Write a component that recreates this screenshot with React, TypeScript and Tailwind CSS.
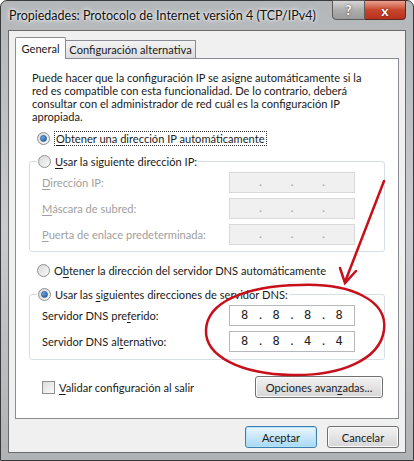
import React from 'react'

const FONT = "font-['Lato',sans-serif]"

// Win7 style radio button
function Radio({ checked }: { checked?: boolean }) {
  return (
    <span className="w-[13px] h-[13px] rounded-full border border-[#8e8f8f] bg-gradient-to-br from-[#d8d8d8] to-[#fafafa] flex items-center justify-center shrink-0">
      {checked && (
        <span className="w-[7px] h-[7px] rounded-full bg-gradient-to-br from-[#84b6e8] to-[#1c5aa6] border border-[#2a5f9b]" />
      )}
    </span>
  )
}

function U({ children }: { children: React.ReactNode }) {
  return <span className="underline underline-offset-2">{children}</span>
}

function IpField({ value, disabled }: { value?: string[]; disabled?: boolean }) {
  const parts = value ?? ['', '', '', '']
  return (
    <div
      className={`w-[126px] h-[21px] border flex items-center justify-around px-[6px] font-['DejaVu_Sans_Mono',monospace] text-[12px] ${
        disabled ? 'bg-[#f0f0f0] border-[#d9d9d9] text-[#a8a8a8]' : 'bg-white border-[#b5b8bd] text-[#222]'
      }`}
    >
      {parts.map((p, i) => (
        <React.Fragment key={i}>
          <span className="w-[10px] text-center">{p}</span>
          {i < 3 && <span className="text-[11px]">.</span>}
        </React.Fragment>
      ))}
    </div>
  )
}

function Row({ label, disabled, value }: { label: React.ReactNode; disabled?: boolean; value?: string[] }) {
  return (
    <div className="flex items-center justify-between h-[21px] pl-[12px] pr-[29px]">
      <span className={`whitespace-nowrap ${disabled ? 'text-[#a0a0a0]' : 'text-[#1a1a1a]'}`}>{label}</span>
      <IpField disabled={disabled} value={value} />
    </div>
  )
}

function Button({ children, focused, className = '' }: { children: React.ReactNode; focused?: boolean; className?: string }) {
  return (
    <button
      className={`h-[22px] rounded-[3px] border flex items-center justify-center text-[#1a1a1a] ${
        focused
          ? 'border-[#3c7fb1] bg-gradient-to-b from-[#eaf6fd] to-[#a7d9f5] shadow-[inset_0_0_0_1px_#b5e3fb]'
          : 'border-[#707070] bg-gradient-to-b from-[#f2f2f2] to-[#d6d6d6] shadow-[inset_0_0_0_1px_#fcfcfc]'
      } ${className}`}
    >
      {children}
    </button>
  )
}

export default function App() {
  return (
    <div className={`w-[414px] h-[461px] ${FONT} text-[11.1px] leading-[13px] relative overflow-hidden`}>
      {/* Window frame */}
      <div className="w-full h-full rounded-t-[7px] border border-[#3a3a3a] bg-gradient-to-b from-[#b4b7ba] via-[#c9cbce] to-[#b0b2b4] flex flex-col px-[7px] pb-[7px]">
        {/* Title bar */}
        <div className="h-[29px] flex items-start justify-between">
          <span className="mt-[7px] ml-[1px] text-[12.5px] leading-[16px] whitespace-nowrap text-[#111] [text-shadow:0_0_6px_#fff,0_0_3px_#fff]">
            Propiedades: Protocolo de Internet versión 4 (TCP/IPv4)
          </span>
          <div className="flex -mt-[1px]">
            <div className="w-[33px] h-[20px] rounded-bl-[4px] border border-[#5b5b5b] bg-gradient-to-b from-[#d6d6d6] via-[#aeaeae] to-[#9a9a9a] flex items-center justify-center text-white font-bold text-[13px] [text-shadow:0_0_2px_#333]">
              ?
            </div>
            <div className="w-[41px] h-[20px] rounded-br-[4px] border border-l-0 border-[#5b2a22] bg-gradient-to-b from-[#e7a18f] via-[#c8452c] to-[#b8301c] flex items-center justify-center text-white font-bold text-[14px] [text-shadow:0_0_2px_#500]">
              x
            </div>
          </div>
        </div>

        {/* Client area */}
        <div className="flex-1 border border-[#6a6a6a] bg-[#f0f0f0] flex flex-col px-[6px] pt-[6px]">
          {/* Tabs */}
          <div className="flex items-end h-[21px] relative z-10">
            <div className="h-[22px] w-[51px] bg-white border border-b-0 border-[#898c95] rounded-t-[2px] flex items-center justify-center text-[#1a1a1a] -mb-[1px]">
              General
            </div>
            <div className="h-[18px] w-[130px] bg-gradient-to-b from-[#f3f3f3] to-[#dcdcdc] border border-l-0 border-b-0 border-[#898c95] flex items-center justify-center text-[#1a1a1a]">
              Configuración alternativa
            </div>
          </div>

          {/* Tab panel */}
          <div className="h-[361px] bg-white border border-[#898c95] flex flex-col px-[13px] pt-[12px] text-[#1a1a1a]">
            <p className="pl-[3px] whitespace-nowrap">
              Puede hacer que la configuración IP se asigne automáticamente si la
              <br />
              red es compatible con esta funcionalidad. De lo contrario, deberá
              <br />
              consultar con el administrador de red cuál es la configuración IP
              <br />
              apropiada.
            </p>

            <div className="mt-[7px] h-[16px] flex items-center gap-[4px] pl-[8px]">
              <Radio checked />
              <span className="border border-dotted border-[#333] px-[1px] leading-[13px]">
                <U>O</U>btener una dirección IP automáticamente
              </span>
            </div>

            <fieldset className="mt-[7px] border border-[#d5dfe5] rounded-[3px] pt-[3px] pb-[6px] flex flex-col gap-[5px]">
              <legend className="ml-[7px] px-[1px] h-[16px] flex items-center gap-[4px]">
                <Radio />
                <span>
                  <U>U</U>sar la siguiente dirección IP:
                </span>
              </legend>
              <Row disabled label={<><U>D</U>irección IP:</>} />
              <Row disabled label={<><U>M</U>áscara de subred:</>} />
              <Row disabled label={<><U>P</U>uerta de enlace predeterminada:</>} />
            </fieldset>

            <div className="mt-[10px] h-[16px] flex items-center gap-[4px] pl-[8px]">
              <Radio />
              <span>
                O<U>b</U>tener la dirección del servidor DNS automáticamente
              </span>
            </div>

            <fieldset className="mt-[8px] border border-[#d5dfe5] rounded-[3px] pt-[3px] pb-[7px] flex flex-col gap-[5px]">
              <legend className="ml-[7px] px-[1px] h-[16px] flex items-center gap-[4px]">
                <Radio checked />
                <span>
                  Usar las <U>s</U>iguientes direcciones de servidor DNS:
                </span>
              </legend>
              <Row label={<>Servidor DNS pre<U>f</U>erido:</>} value={['8', '8', '8', '8']} />
              <Row label={<>Servidor DNS al<U>t</U>ernativo:</>} value={['8', '8', '4', '4']} />
            </fieldset>

            <div className="mt-[16px] flex items-center justify-between pl-[13px] pr-[2px]">
              <div className="flex items-center gap-[4px]">
                <span className="w-[13px] h-[13px] border border-[#8e8f8f] bg-gradient-to-br from-[#dcdcdc] to-[#fbfbfb]" />
                <span>
                  <U>V</U>alidar configuración al salir
                </span>
              </div>
              <Button className="w-[128px] h-[21px]">
                Opciones avan<U>z</U>adas...
              </Button>
            </div>
          </div>

          {/* Dialog buttons */}
          <div className="mt-[7px] flex justify-end gap-[10px]">
            <Button focused className="w-[72px]">Aceptar</Button>
            <Button className="w-[72px]">Cancelar</Button>
          </div>
        </div>
      </div>

      {/* Red annotation */}
      <svg className="absolute inset-0 pointer-events-none" width="414" height="461" viewBox="0 0 414 461">
        <g fill="none" stroke="#c8101c" strokeWidth="2.5" strokeLinecap="round">
          <path d="M384 181 L345 282" />
          <path d="M340 268 L345 283 L356 271" />
          <path d="M300 285 C 350 283, 388 300, 384 330 C 380 360, 340 376, 292 375 C 240 374, 205 356, 206 330 C 207 302, 245 286, 300 285 Z" />
        </g>
      </svg>
    </div>
  )
}
